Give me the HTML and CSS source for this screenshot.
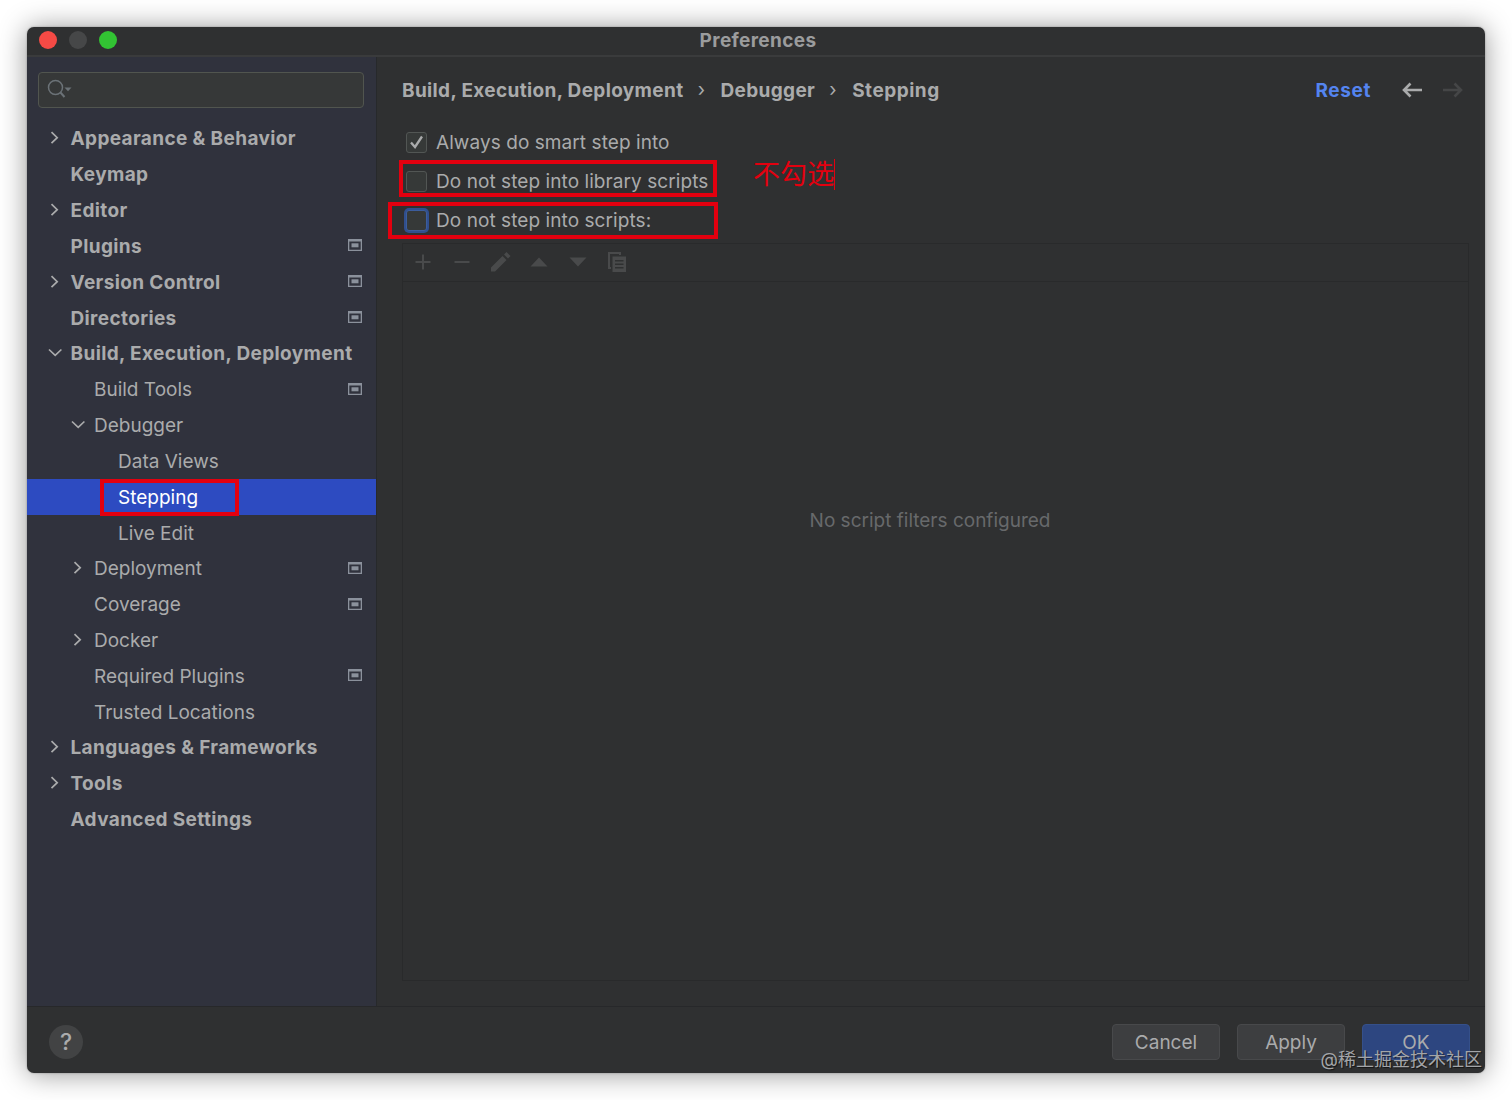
FILE: index.html
```html
<!DOCTYPE html>
<html lang="en">
<head>
  <meta charset="utf-8">
  <title>Preferences</title>
  <link rel="stylesheet" href="styles.css">
</head>
<body>
  <svg class="defs" width="0" height="0">
    <symbol id="right" viewBox="0 0 16 16"><path d="M4.5 2.2l5.7 5.5-5.7 5.5" fill="none" stroke="currentColor" stroke-width="1.7"/></symbol>
    <symbol id="down" viewBox="0 0 16 16"><path d="M2 4.500l6.200 5.800L14.400 4.500" fill="none" stroke="currentColor" stroke-width="1.7"/></symbol>
    <symbol id="project" viewBox="0 0 14 12"><path d="M0 0h14v12H0zM1.3 2.5v8.2h11.4V2.500z" fill="currentColor" fill-rule="evenodd"/><path d="M3.500 4.300h7v4h-7z" fill="currentColor"/></symbol>
  </svg>

  <div class="window">
    <div class="titlebar">
      <div class="lights">
        <span class="light red"></span>
        <span class="light gray"></span>
        <span class="light green"></span>
      </div>
      <div class="title">Preferences</div>
    </div>

    <div class="content">
      <div class="sidebar">
        <div class="search">
          <svg width="26" height="22" viewBox="0 0 26 22"><circle cx="8.500" cy="8.500" r="7" fill="none" stroke="currentColor" stroke-width="1.500"/><path d="M13.500 13.500l4 4.500" stroke="currentColor" stroke-width="2"/><path d="M17.500 8.500h7l-3.500 3.700z" fill="currentColor"/></svg>
        </div>
        <div class="tree">
          <div class="row top"><svg class="arrow"><use href="#right"/></svg><span>Appearance &amp; Behavior</span></div>
          <div class="row top"><i class="arrow"></i><span>Keymap</span></div>
          <div class="row top"><svg class="arrow"><use href="#right"/></svg><span>Editor</span></div>
          <div class="row top"><i class="arrow"></i><span>Plugins</span><svg class="proj"><use href="#project"/></svg></div>
          <div class="row top"><svg class="arrow"><use href="#right"/></svg><span>Version Control</span><svg class="proj"><use href="#project"/></svg></div>
          <div class="row top"><i class="arrow"></i><span>Directories</span><svg class="proj"><use href="#project"/></svg></div>
          <div class="row top"><svg class="arrow"><use href="#down"/></svg><span>Build, Execution, Deployment</span></div>
          <div class="row second"><i class="arrow"></i><span>Build Tools</span><svg class="proj"><use href="#project"/></svg></div>
          <div class="row second"><svg class="arrow"><use href="#down"/></svg><span>Debugger</span></div>
          <div class="row third"><i class="arrow"></i><span>Data Views</span></div>
          <div class="row third selected"><i class="arrow"></i><span>Stepping</span><div class="mark mark-stepping"></div></div>
          <div class="row third"><i class="arrow"></i><span>Live Edit</span></div>
          <div class="row second"><svg class="arrow"><use href="#right"/></svg><span>Deployment</span><svg class="proj"><use href="#project"/></svg></div>
          <div class="row second"><i class="arrow"></i><span>Coverage</span><svg class="proj"><use href="#project"/></svg></div>
          <div class="row second"><svg class="arrow"><use href="#right"/></svg><span>Docker</span></div>
          <div class="row second"><i class="arrow"></i><span>Required Plugins</span><svg class="proj"><use href="#project"/></svg></div>
          <div class="row second"><i class="arrow"></i><span>Trusted Locations</span></div>
          <div class="row top"><svg class="arrow"><use href="#right"/></svg><span>Languages &amp; Frameworks</span></div>
          <div class="row top"><svg class="arrow"><use href="#right"/></svg><span>Tools</span></div>
          <div class="row top"><i class="arrow"></i><span>Advanced Settings</span></div>
        </div>
      </div>

      <div class="main">
        <div class="header">
          <span class="crumb crumb-build">Build, Execution, Deployment</span>
          <span class="sep">›</span>
          <span class="crumb">Debugger</span>
          <span class="sep">›</span>
          <span class="crumb">Stepping</span>
          <span class="reset">Reset</span>
          <svg class="nav" viewBox="0 0 20 16"><path d="M20 8H2M8.500 1.500L2 8l6.500 6.500" fill="none" stroke="currentColor" stroke-width="2.600"/></svg>
          <svg class="nav off" viewBox="0 0 20 16"><path d="M0 8h18M11.500 1.500L18 8l-6.500 6.500" fill="none" stroke="currentColor" stroke-width="2.600"/></svg>
        </div>

        <div class="options">
          <div class="option">
            <span class="box"><svg width="17" height="17" viewBox="0 0 17 17"><path d="M3 8.500l4 4.500L14 2.500" fill="none" stroke="currentColor" stroke-width="2.300"/></svg></span>
            <span>Always do smart step into</span>
          </div>
          <div class="option">
            <span class="box"></span>
            <span>Do not step into library scripts</span>
            <div class="mark mark-library"></div>
            <div class="note">不勾选</div>
          </div>
          <div class="option">
            <span class="box focus"></span>
            <span>Do not step into scripts:</span>
            <div class="mark mark-scripts"></div>
          </div>
        </div>

        <div class="list">
          <div class="toolbar">
            <svg viewBox="0 0 20 20"><path d="M10 2.500v15M2.500 10h15" stroke="currentColor" stroke-width="2"/></svg>
            <svg viewBox="0 0 20 20"><path d="M2.500 10h15" stroke="currentColor" stroke-width="2"/></svg>
            <svg viewBox="0 0 20 20"><path d="M0 19.500v-4L11.500 4l4 4L4 19.500zM13 2.500L15.500 0l4 4L17 6.500z" fill="currentColor"/></svg>
            <svg viewBox="0 0 20 20"><path d="M1.500 14.500h17L10 5.500z" fill="currentColor"/></svg>
            <svg viewBox="0 0 20 20"><path d="M1.500 5.500h17L10 14.500z" fill="currentColor"/></svg>
            <svg viewBox="0 0 20 20"><path d="M1 0h13v3h-2V2H3v13h1v2H1z" fill="currentColor"/><path d="M5.500 4.500H19V20H5.500zM8 8v1.500h8.500V8zm0 3.500V13h8.500v-1.500zM8 15v1.500h8.500V15z" fill="currentColor" fill-rule="evenodd"/></svg>
          </div>
          <div class="empty">No script filters configured</div>
        </div>
      </div>
    </div>

    <div class="footer">
      <div class="help">?</div>
      <div class="btn">Cancel</div>
      <div class="btn">Apply</div>
      <div class="btn primary">OK</div>
      <div class="watermark">@稀土掘金技术社区</div>
    </div>
  </div>
</body>
</html>
```

FILE: styles.css
```css
* {
  box-sizing: border-box;
}

body {
  margin: 0;
  padding: 27px;
  height: 1100px;
  background: #fff;
  font-family: Inter, "Noto Sans CJK SC", sans-serif;
  font-size: 19px;
  color: #aaabac;
  overflow: hidden;
}

.defs {
  position: absolute;
}

.window {
  position: relative;
  display: flex;
  flex-direction: column;
  width: 1458px;
  height: 1046px;
  border-radius: 7px;
  background: #2f3031;
  box-shadow: 0 0 2px rgba(0,0,0,.35), 0 1px 28px rgba(0,0,0,.42);
}

.titlebar {
  display: flex;
  align-items: center;
  height: 30px;
  padding: 0 12px 2px;
  border-bottom: 2px solid #3a3b3c;
}

.lights {
  display: flex;
  gap: 12px;
  width: 90px;
}

.light {
  width: 18px;
  height: 18px;
  border-radius: 50%;
}

.red { background: #f54a45; }
.gray { background: #464748; }
.green { background: #32c333; }

.title {
  flex: 1;
  padding-top: 1px;
  padding-right: 86px;
  text-align: center;
  font-weight: 700;
  letter-spacing: .35px;
  color: #9b9c9d;
}

.content {
  display: flex;
  flex: 1;
  min-height: 0;
}

.sidebar {
  width: 350px;
  background: #30323d;
  border-right: 1px solid #27292b;
}

.search {
  display: flex;
  align-items: center;
  width: 326px;
  height: 36px;
  margin: 15px 0 13px 11px;
  padding-left: 8px;
  border: 1px solid #51554f;
  border-radius: 4px;
  background: #363838;
  color: #6b7277;
}

.row {
  position: relative;
  display: flex;
  align-items: center;
  height: 35.83px;
  padding-right: 14px;
}

.row svg {
  margin-bottom: 1px;
}

.arrow {
  width: 16px;
  height: 16px;
  margin-right: 8px;
}

.top {
  padding-left: 19.500px;
  font-weight: 700;
  letter-spacing: .37px;
}

.second { padding-left: 43px; }
.third { padding-left: 67px; }

.selected {
  background: #2d4bc1;
  color: #fff;
}

.row .proj {
  width: 14px;
  height: 12px;
  margin-left: auto;
  margin-bottom: 2px;
  color: #8b919c;
}

.mark {
  position: absolute;
  border: 4px solid #e3000f;
}

.mark-stepping {
  left: 73px;
  top: 0;
  width: 139px;
  height: 37px;
}

.mark-library {
  left: -3px;
  top: -2px;
  width: 318px;
  height: 37px;
}

.mark-scripts {
  left: -14px;
  top: 1px;
  width: 330px;
  height: 37px;
}

.main {
  display: flex;
  flex-direction: column;
  flex: 1;
  padding: 15px 16px 25px 25px;
}

.header {
  display: flex;
  align-items: center;
  height: 37px;
  padding-right: 6px;
  font-weight: 700;
  letter-spacing: .35px;
}

.sep {
  width: 37px;
  padding-right: 1px;
  padding-bottom: 2px;
  text-align: center;
  font-weight: 400;
}

.crumb:nth-of-type(5) {
  letter-spacing: .5px;
}

.reset {
  margin-left: auto;
  margin-right: 31px;
  letter-spacing: .6px;
  color: #5484f0;
}

.nav {
  width: 20px;
  height: 16px;
  margin-bottom: 2px;
  color: #aaabac;
}

.off {
  margin-left: 21px;
  color: #454647;
}

.options {
  padding-top: 14px;
}

.option {
  position: relative;
  display: flex;
  align-items: center;
  height: 39px;
  padding-left: 4px;
  letter-spacing: .07px;
}

.box {
  display: flex;
  align-items: center;
  justify-content: center;
  width: 21px;
  height: 21px;
  margin-right: 9px;
  margin-bottom: 1px;
  border: 1px solid #525654;
  border-radius: 3px;
  background: #363938;
}

.focus {
  border-color: #3c5d9c;
  box-shadow: 0 0 0 2px #304f8e;
}

.note {
  position: absolute;
  left: 351px;
  top: -3px;
  height: 31px;
  border-right: 1px solid #e3000f;
  font-size: 27px;
  line-height: 31px;
  color: #e3000f;
}

.list {
  display: flex;
  flex-direction: column;
  flex: 1;
  margin-top: 3px;
  border: 1px solid #292a2b;
}

.toolbar {
  display: flex;
  align-items: center;
  gap: 18.8px;
  height: 38px;
  padding-left: 10px;
  padding-bottom: 1px;
  border-bottom: 1px solid #292a2b;
  color: #494a4b;
}

.toolbar svg {
  width: 20px;
  height: 20px;
}

.empty {
  padding: 227px 11px 0 0;
  text-align: center;
  color: #67696b;
}

.footer {
  position: relative;
  display: flex;
  align-items: center;
  gap: 17px;
  height: 67px;
  padding: 4px 15px 0 22px;
  border-top: 1px solid #27282a;
}

.help {
  width: 34px;
  height: 34px;
  margin-right: auto;
  border-radius: 50%;
  background: #424344;
  line-height: 34px;
  text-align: center;
  font-size: 23px;
  font-weight: 500;
}

.btn {
  width: 108px;
  height: 36px;
  border: 1px solid #48494b;
  border-radius: 4px;
  background: #3d3e40;
  line-height: 36px;
  text-align: center;
}

.primary {
  border-color: #35508a;
  background: #2d4680;
}

.watermark {
  position: absolute;
  right: 3px;
  bottom: 1px;
  font-size: 18px;
  line-height: 24px;
  color: #a3a5a8;
  text-shadow: 1px 1px 1px rgba(0,0,0,.6);
}
```
